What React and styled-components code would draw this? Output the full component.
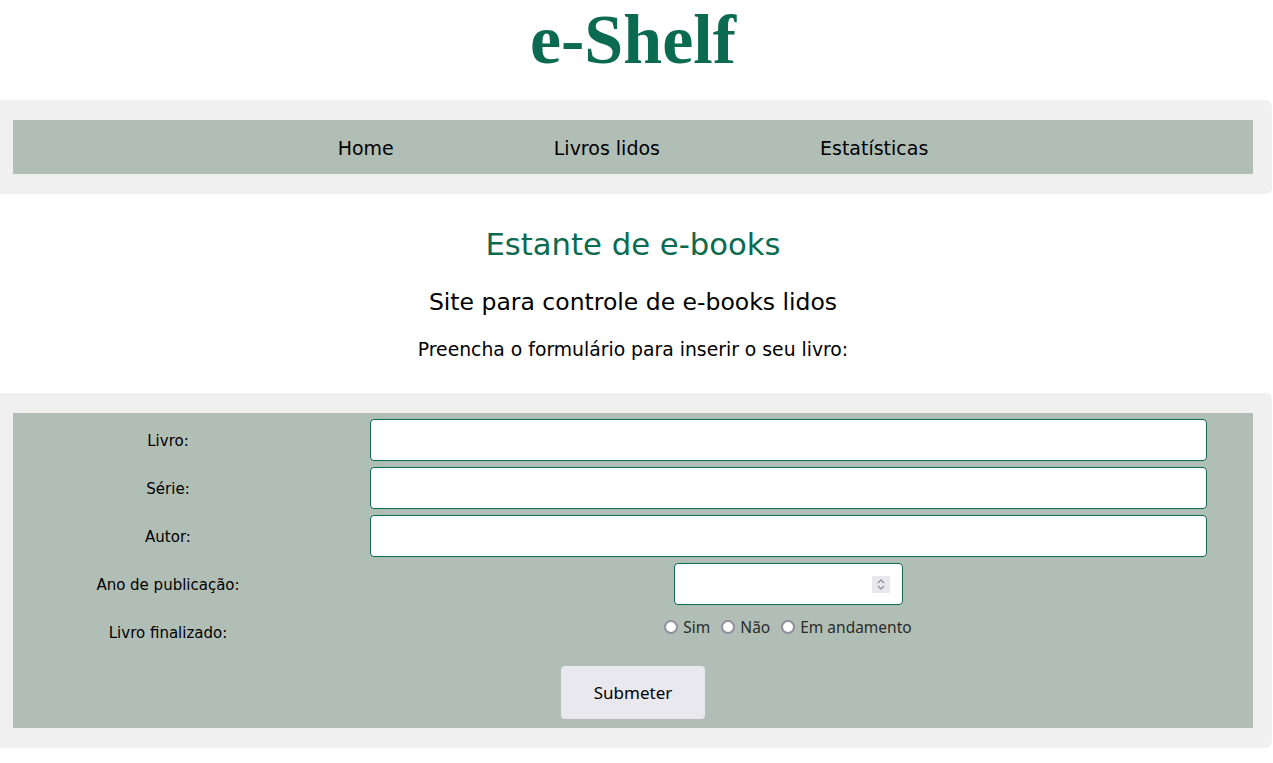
import React from "react";
import styled, { createGlobalStyle } from "styled-components";

const Global = createGlobalStyle`
  html, body { margin: 0; padding: 0; background: #ffffff; }
  body { font-family: "DejaVu Sans", "Liberation Sans", sans-serif; color: #000; overflow-x: hidden; }
  * { box-sizing: border-box; }
`;

const Page = styled.div`
  width: 1266px;
`;

const Title = styled.h1`
  margin: 0 0 20px;
  text-align: center;
  font-family: "Liberation Serif", "Times New Roman", serif;
  font-weight: 700;
  font-size: 70px;
  line-height: 80px;
  color: #0b6b50;
`;

const Panel = styled.div`
  background: #f0f0f0;
  border-radius: 0 6px 6px 0;
  margin-right: -6px;
  padding: 20px 19px 20px 13px;
`;

const NavBar = styled.nav`
  background: #b1beb5;
  height: 54px;
  display: flex;
  align-items: center;
  justify-content: center;
  gap: 160px;
  padding-top: 2px;
`;

const NavLink = styled.a`
  font-size: 19px;
  color: #000;
  text-decoration: none;
  cursor: pointer;
`;

const Intro = styled.section`
  padding: 31px 0 31px;
  display: flex;
  flex-direction: column;
  align-items: center;
`;

const Heading = styled.h2`
  margin: 0;
  font-weight: 400;
  font-size: 30.7px;
  line-height: 40px;
  color: #0b6b50;
`;

const Subtitle = styled.h3`
  margin: 20px 0 0;
  font-weight: 400;
  font-size: 23.5px;
  line-height: 34px;
`;

const Lead = styled.p`
  margin: 19px 0 0;
  font-size: 18.8px;
  line-height: 24px;
`;

const FormGrid = styled.form`
  background: #b1beb5;
  display: grid;
  grid-template-columns: 310px 1fr;
  row-gap: 6px;
  padding: 6px 0 9px;
`;

const Label = styled.label`
  display: flex;
  align-items: center;
  justify-content: center;
  font-size: 15px;
  min-height: 42px;
  padding-top: 1px;
`;

const Field = styled.div`
  display: flex;
  justify-content: center;
  align-items: ${(p) => (p.$top ? "flex-start" : "center")};
  padding-top: ${(p) => (p.$top ? "8px" : "0")};
`;

const TextInput = styled.input`
  width: 837px;
  height: 42px;
  border: 1px solid #0b6b50;
  border-radius: 4px;
  background: #fff;
  padding: 0 8px;
  font-size: 15px;
  outline: none;
`;

const NumberBox = styled.div`
  width: 229px;
  height: 42px;
  border: 1px solid #0b6b50;
  border-radius: 4px;
  background: #fff;
  display: flex;
  align-items: center;
  padding: 0 12px 0 8px;
`;

const NumberInput = styled.input`
  flex: 1;
  min-width: 0;
  border: none;
  outline: none;
  font-size: 15px;
  background: transparent;
`;

const Spinner = styled.span`
  width: 18px;
  height: 17px;
  background: #e9e9ed;
  display: flex;
  align-items: center;
  justify-content: center;
`;

const RadioGroup = styled.div`
  display: flex;
  align-items: center;
  gap: 11px;
  font-family: "Noto Sans", "Open Sans", sans-serif;
  font-size: 15.5px;
  color: #2b2b2b;
`;

const RadioOption = styled.label`
  display: flex;
  align-items: center;
  gap: 5px;
  line-height: 16px;
`;

const Radio = styled.input`
  appearance: none;
  margin: 0;
  width: 14px;
  height: 14px;
  border: 2px solid #8f8f9d;
  border-radius: 50%;
  background: #fff;
`;

const SubmitRow = styled.div`
  grid-column: 1 / -1;
  display: flex;
  justify-content: center;
  padding-top: 7px;
`;

const Submit = styled.button`
  width: 144px;
  height: 53px;
  border: none;
  border-radius: 4px;
  background: #e9e8ee;
  font-family: "Noto Sans", "Open Sans", sans-serif;
  font-size: 17px;
  color: #000;
  cursor: pointer;
`;

const SpinIcon = () => (
  <svg width="10" height="13" viewBox="0 0 10 13" fill="none" stroke="#8f8f9d" strokeWidth="1.3">
    <path d="M2 5 L5 2 L8 5" />
    <path d="M2 8 L5 11 L8 8" />
  </svg>
);

export default function App() {
  return (
    <Page>
      <Global />
      <Title>e-Shelf</Title>
      <Panel>
        <NavBar>
          <NavLink>Home</NavLink>
          <NavLink>Livros lidos</NavLink>
          <NavLink>Estatísticas</NavLink>
        </NavBar>
      </Panel>
      <Intro>
        <Heading>Estante de e-books</Heading>
        <Subtitle>Site para controle de e-books lidos</Subtitle>
        <Lead>Preencha o formulário para inserir o seu livro:</Lead>
      </Intro>
      <Panel>
        <FormGrid onSubmit={(e) => e.preventDefault()}>
          <Label htmlFor="livro">Livro:</Label>
          <Field>
            <TextInput id="livro" type="text" />
          </Field>
          <Label htmlFor="serie">Série:</Label>
          <Field>
            <TextInput id="serie" type="text" />
          </Field>
          <Label htmlFor="autor">Autor:</Label>
          <Field>
            <TextInput id="autor" type="text" />
          </Field>
          <Label htmlFor="ano">Ano de publicação:</Label>
          <Field>
            <NumberBox>
              <NumberInput id="ano" type="text" inputMode="numeric" />
              <Spinner>
                <SpinIcon />
              </Spinner>
            </NumberBox>
          </Field>
          <Label>Livro finalizado:</Label>
          <Field $top>
            <RadioGroup>
              <RadioOption>
                <Radio type="radio" name="fin" />
                Sim
              </RadioOption>
              <RadioOption>
                <Radio type="radio" name="fin" />
                Não
              </RadioOption>
              <RadioOption>
                <Radio type="radio" name="fin" />
                Em andamento
              </RadioOption>
            </RadioGroup>
          </Field>
          <SubmitRow>
            <Submit type="submit">Submeter</Submit>
          </SubmitRow>
        </FormGrid>
      </Panel>
    </Page>
  );
}
